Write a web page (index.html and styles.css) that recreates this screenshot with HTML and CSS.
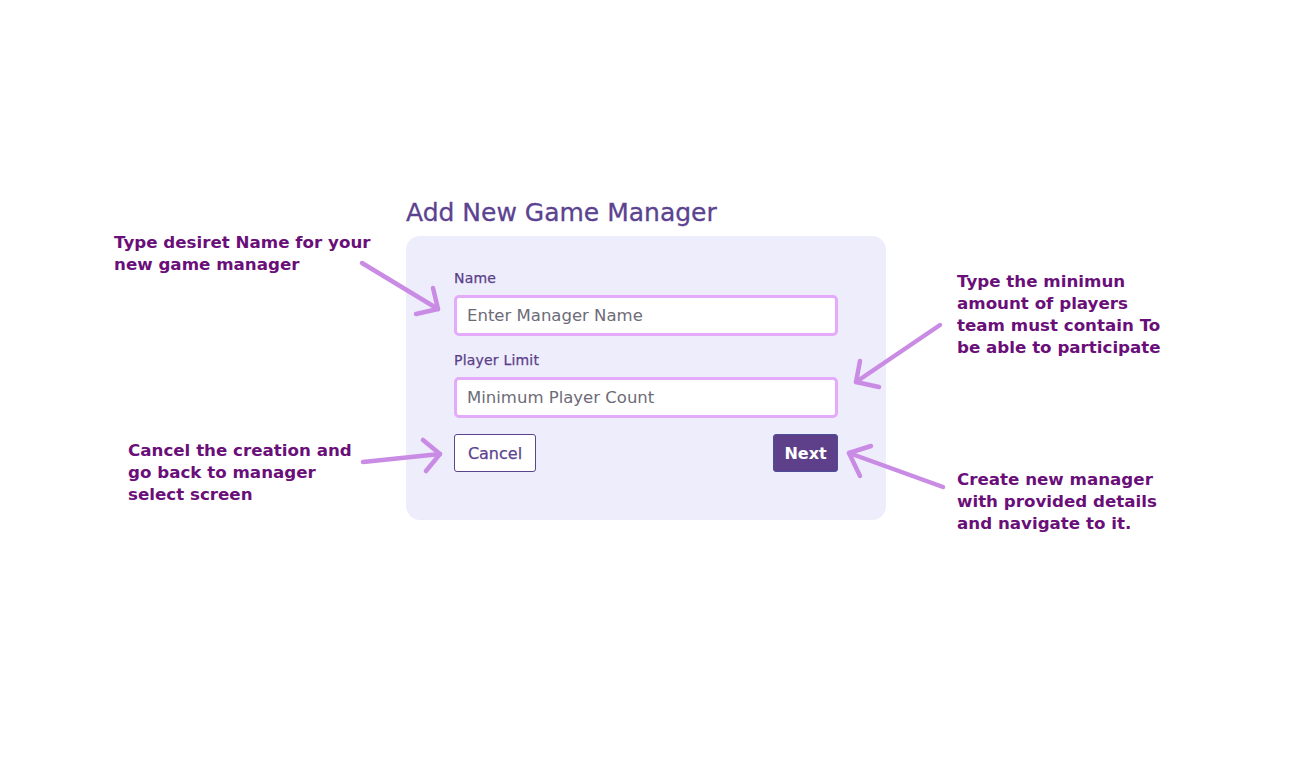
FILE: index.html
```html
<!DOCTYPE html>
<html lang="en">
<head>
<meta charset="utf-8">
<title>Add New Game Manager</title>
<link rel="stylesheet" href="styles.css">
</head>
<body>
<main class="page">
  <div class="form-wrap">
    <h1 class="title">Add New Game Manager</h1>
    <section class="card">
      <div class="field">
        <label class="field-label" for="name">Name</label>
        <input class="field-input" id="name" type="text" placeholder="Enter Manager Name">
      </div>
      <div class="field">
        <label class="field-label" for="limit">Player Limit</label>
        <input class="field-input" id="limit" type="text" placeholder="Minimum Player Count">
      </div>
      <div class="actions">
        <button class="btn btn-cancel" type="button">Cancel</button>
        <button class="btn btn-next" type="button">Next</button>
      </div>
    </section>
  </div>
</main>

<p class="note note-name">Type desiret Name for your<br>new game manager</p>
<p class="note note-cancel">Cancel the creation and<br>go back to manager<br>select screen</p>
<p class="note note-limit">Type the minimun<br>amount of players<br>team must contain To<br>be able to participate</p>
<p class="note note-next">Create new manager<br>with provided details<br>and navigate to it.</p>

<svg class="arrows" width="1296" height="766" viewBox="0 0 1296 766" aria-hidden="true">
  <g fill="none" stroke="#c98be4" stroke-width="4.5" stroke-linecap="round" stroke-linejoin="round">
    <path d="M362 263 L438 309"/>
    <path d="M433 288 L438 309 L416 314"/>
    <path d="M363 462 L440 454"/>
    <path d="M423 440 L440 454 L426 471"/>
    <path d="M940 325 L856 382"/>
    <path d="M860 361 L856 382 L879 387"/>
    <path d="M943 487 L849 453"/>
    <path d="M871 446 L849 453 L860 476"/>
  </g>
</svg>
</body>
</html>
```

FILE: styles.css
```css
* { box-sizing: border-box; }

body {
  margin: 0;
  background: #ffffff;
  font-family: "DejaVu Sans", "Open Sans", Arial, sans-serif;
  width: 1296px;
  height: 766px;
  overflow: hidden;
  position: relative;
}

.page {
  padding-top: 198px;
}

.form-wrap {
  width: 480px;
  margin-left: 406px;
}

.title {
  margin: 0 0 8px;
  font-size: 25px;
  line-height: 30px;
  font-weight: 400;
  color: #5b4390;
  -webkit-text-stroke: 0.3px #5b4390;
}

.card {
  background: #eeedfc;
  border-radius: 14px;
  padding: 34px 48px 48px;
}

.field {
  margin-bottom: 16px;
}

.field-label {
  display: block;
  font-size: 14px;
  line-height: 16px;
  font-weight: 400;
  color: #5a3f88;
  letter-spacing: 0.2px;
  -webkit-text-stroke: 0.25px #5a3f88;
  margin-bottom: 9px;
}

.field-input {
  display: block;
  width: 100%;
  height: 41px;
  border: 3px solid #e3abf9;
  border-radius: 5px;
  background: #ffffff;
  padding: 0 10px;
  font-family: inherit;
  font-size: 16.5px;
  color: #333;
  outline: none;
}

.field-input::placeholder {
  color: #6d6b78;
  opacity: 1;
}

.actions {
  display: flex;
  justify-content: space-between;
  margin-top: 14px;
}

.btn {
  height: 38px;
  border-radius: 3px;
  font-family: inherit;
  font-size: 16px;
  padding: 0;
  cursor: pointer;
}

.btn-cancel {
  background: #ffffff;
  border: 1px solid #5b4390;
  color: #5b4390;
  font-weight: 400;
  -webkit-text-stroke: 0.25px #5b4390;
  width: 82px;
}

.btn-next {
  background: #5e3f8a;
  border: 1px solid #4a4f97;
  color: #ffffff;
  font-weight: 700;
  width: 65px;
}

.note {
  position: absolute;
  margin: 0;
  font-size: 16.7px;
  line-height: 22px;
  font-weight: 700;
  color: #6a0f79;
  white-space: nowrap;
}

.note-name { left: 114px; top: 231px; }
.note-cancel { left: 128px; top: 439px; }
.note-limit { left: 957px; top: 270px; }
.note-next { left: 957px; top: 468px; }

.arrows {
  position: absolute;
  left: 0;
  top: 0;
  pointer-events: none;
}
```
